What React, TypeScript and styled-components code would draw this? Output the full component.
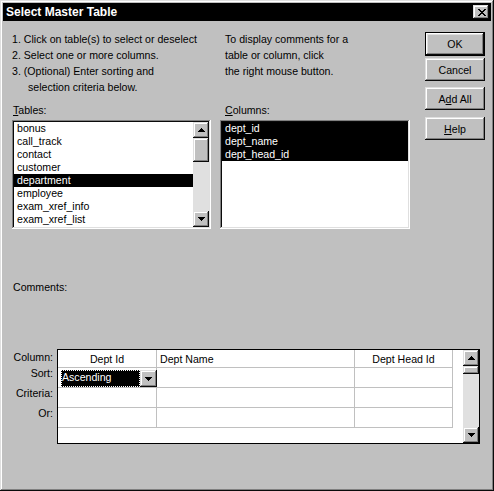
import React from "react";
import styled, { createGlobalStyle } from "styled-components";

const Global = createGlobalStyle`
  html, body { margin: 0; padding: 0; background: #c0c0c0; }
  body {
    font-family: "Liberation Sans", Arial, sans-serif;
    font-size: 10.6px;
    color: #000;
  }
  * { box-sizing: border-box; }
`;

const raised = `
  background: #c0c0c0;
  box-shadow: inset -1px -1px #0a0a0a, inset 1px 1px #dfdfdf,
    inset -2px -2px #808080, inset 2px 2px #fff;
`;

const sunken = `
  box-shadow: inset -1px -1px #fff, inset 1px 1px #808080,
    inset -2px -2px #dfdfdf, inset 2px 2px #0a0a0a;
`;

const Window = styled.div`
  width: 494px;
  height: 491px;
  padding: 3px;
  background: #c0c0c0;
  box-shadow: inset -1px -1px #0a0a0a, inset 1px 1px #dfdfdf,
    inset -2px -2px #808080, inset 2px 2px #fff;
  display: flex;
  flex-direction: column;
`;

const TitleBar = styled.div`
  height: 18px;
  flex: none;
  background: #000;
  color: #fff;
  display: flex;
  align-items: center;
  justify-content: space-between;
  padding: 0 2px 0 3px;
`;

const Title = styled.span`
  font-weight: bold;
  font-size: 12px;
  line-height: 14px;
`;

const CloseButton = styled.div`
  ${raised}
  width: 16px;
  height: 14px;
  display: flex;
  align-items: center;
  justify-content: center;
  padding-left: 1px;
`;

const Body = styled.div`
  padding-left: 9px;
  display: flex;
  flex-direction: column;
`;

const TopArea = styled.div`
  display: flex;
`;

const LeftPane = styled.div`
  width: 398px;
  display: flex;
  flex-direction: column;
`;

const Instructions = styled.div`
  display: flex;
  padding-top: 10px;
  line-height: 16px;
`;

const InstrCol = styled.div<{ $width?: number }>`
  width: ${(p) => (p.$width ? `${p.$width}px` : "auto")};
  flex: none;
  white-space: nowrap;
`;

const InstrLine = styled.div<{ $indent?: boolean }>`
  padding-left: ${(p) => (p.$indent ? "16px" : "0")};
`;

const ListsRow = styled.div`
  display: flex;
  gap: 9px;
`;

const ListGroup = styled.div<{ $width: number }>`
  width: ${(p) => p.$width}px;
  display: flex;
  flex-direction: column;
`;

const FieldLabel = styled.div<{ $indent: number }>`
  margin-top: 8px;
  line-height: 14px;
  height: 14px;
  padding-left: ${(p) => p.$indent}px;
  white-space: nowrap;
`;

const ListBox = styled.div`
  ${sunken}
  background: #fff;
  margin-top: 3px;
  height: 109px;
  padding: 2px;
  display: flex;
`;

const Items = styled.div`
  flex: 1;
  overflow: hidden;
`;

const ListItem = styled.div<{ $selected?: boolean }>`
  height: 13px;
  line-height: 13px;
  padding-left: 3px;
  white-space: nowrap;
  background: ${(p) => (p.$selected ? "#000" : "transparent")};
  color: ${(p) => (p.$selected ? "#fff" : "#000")};
`;

const ScrollBar = styled.div`
  width: 16px;
  flex: none;
  display: flex;
  flex-direction: column;
`;

const ArrowButton = styled.div`
  ${raised}
  width: 16px;
  height: 16px;
  flex: none;
  display: flex;
  align-items: center;
  justify-content: center;
`;

const Track = styled.div`
  flex: 1;
  background: #e0e0e0;
  display: flex;
  flex-direction: column;
`;

const Thumb = styled.div<{ $size: number }>`
  ${raised}
  height: ${(p) => p.$size}px;
  flex: none;
`;

const ButtonColumn = styled.div`
  margin-left: 15px;
  padding-top: 11px;
  display: flex;
  flex-direction: column;
`;

const Button = styled.div<{ $default?: boolean; $gap: number }>`
  ${raised}
  width: 60px;
  height: ${(p) => (p.$default ? 24 : 23)}px;
  margin-top: ${(p) => p.$gap}px;
  display: flex;
  align-items: center;
  justify-content: center;
  ${(p) =>
    p.$default
      ? `box-shadow: inset 0 0 0 1px #000, inset -2px -2px #0a0a0a, inset 2px 2px #fff,
        inset -3px -3px #808080, inset 3px 3px #dfdfdf;`
      : ""}
`;

const CommentsLabel = styled.div`
  margin-top: 51px;
  line-height: 14px;
  height: 14px;
  padding-left: 1px;
`;

const GridSection = styled.div`
  margin-top: 55px;
  display: flex;
  gap: 4px;
`;

const RowLabels = styled.div`
  width: 41px;
  padding-top: 1px;
  display: grid;
  grid-template-rows: 16px 20px 20px 20px;
  align-content: start;
  text-align: right;
  line-height: 14px;
`;

const GridBox = styled.div`
  width: 423px;
  height: 95px;
  border: 1px solid #000;
  background: #fff;
  display: flex;
`;

const GridTable = styled.div`
  display: grid;
  grid-template-columns: 99px 198px 98px;
  grid-template-rows: 18px 20px 20px 20px;
  align-content: start;
`;

const Cell = styled.div<{ $align?: "center" | "left" }>`
  border-right: 1px solid #c0c0c0;
  border-bottom: 1px solid #c0c0c0;
  display: flex;
  align-items: center;
  justify-content: ${(p) => (p.$align === "center" ? "center" : "flex-start")};
  padding-left: ${(p) => (p.$align === "center" ? 0 : 3)}px;
  white-space: nowrap;
`;

const ComboCell = styled.div`
  border-right: 1px solid #c0c0c0;
  border-bottom: 1px solid #c0c0c0;
  padding: 2px 0 0 3px;
  position: relative;
  z-index: 1;
`;

const Combo = styled.div`
  width: 96px;
  height: 17px;
  display: flex;
`;

const ComboText = styled.div`
  flex: 1;
  background: #000;
  color: #fff;
  line-height: 15px;
  padding-left: 1px;
  outline: 1px dotted #fff;
  outline-offset: -1px;
`;

const ComboButton = styled(ArrowButton)`
  width: 17px;
  height: 17px;
`;

const GridSpacer = styled.div`
  flex: 1;
`;

const Arrow = ({ dir }: { dir: "up" | "down" }) => {
  const rows = dir === "down" ? [7, 5, 3, 1] : [1, 3, 5, 7];
  return (
    <svg width="7" height="4" viewBox="0 0 7 4" shapeRendering="crispEdges">
      {rows.map((w, i) => (
        <rect key={i} x={(7 - w) / 2} y={i} width={w} height={1} fill="#000" />
      ))}
    </svg>
  );
};

const CloseGlyph = () => {
  const px = [
    "XX....XX",
    ".XX..XX.",
    "..XXXX..",
    "...XX...",
    "..XXXX..",
    ".XX..XX.",
    "XX....XX",
  ];
  return (
    <svg width="8" height="7" viewBox="0 0 8 7" shapeRendering="crispEdges">
      {px.flatMap((row, y) =>
        row.split("").map((c, x) =>
          c === "X" ? <rect key={`${x}-${y}`} x={x} y={y} width={1} height={1} fill="#000" /> : null
        )
      )}
    </svg>
  );
};

const VScroll = ({ thumb }: { thumb: number }) => (
  <ScrollBar>
    <ArrowButton>
      <Arrow dir="up" />
    </ArrowButton>
    <Track>
      <Thumb $size={thumb} />
    </Track>
    <ArrowButton>
      <Arrow dir="down" />
    </ArrowButton>
  </ScrollBar>
);

const tables = [
  "bonus",
  "call_track",
  "contact",
  "customer",
  "department",
  "employee",
  "exam_xref_info",
  "exam_xref_list",
];

const columns = ["dept_id", "dept_name", "dept_head_id"];

export default function App() {
  return (
    <>
      <Global />
      <Window>
        <TitleBar>
          <Title>Select Master Table</Title>
          <CloseButton>
            <CloseGlyph />
          </CloseButton>
        </TitleBar>
        <Body>
          <TopArea>
            <LeftPane>
              <Instructions>
                <InstrCol $width={213}>
                  <InstrLine>1. Click on table(s) to select or deselect</InstrLine>
                  <InstrLine>2. Select one or more columns.</InstrLine>
                  <InstrLine>3. (Optional) Enter sorting and</InstrLine>
                  <InstrLine $indent>selection criteria below.</InstrLine>
                </InstrCol>
                <InstrCol>
                  <InstrLine>To display comments for a</InstrLine>
                  <InstrLine>table or column, click</InstrLine>
                  <InstrLine>the right mouse button.</InstrLine>
                </InstrCol>
              </Instructions>
              <ListsRow>
                <ListGroup $width={199}>
                  <FieldLabel $indent={1}>
                    <u>T</u>ables:
                  </FieldLabel>
                  <ListBox>
                    <Items>
                      {tables.map((t) => (
                        <ListItem key={t} $selected={t === "department"}>
                          {t}
                        </ListItem>
                      ))}
                    </Items>
                    <VScroll thumb={24} />
                  </ListBox>
                </ListGroup>
                <ListGroup $width={190}>
                  <FieldLabel $indent={5}>
                    <u>C</u>olumns:
                  </FieldLabel>
                  <ListBox>
                    <Items>
                      {columns.map((c) => (
                        <ListItem key={c} $selected>
                          {c}
                        </ListItem>
                      ))}
                    </Items>
                  </ListBox>
                </ListGroup>
              </ListsRow>
            </LeftPane>
            <ButtonColumn>
              <Button $default $gap={0}>OK</Button>
              <Button $gap={2}>Cancel</Button>
              <Button $gap={6}>
                A<u>d</u>d All
              </Button>
              <Button $gap={7}>
                <u>H</u>elp
              </Button>
            </ButtonColumn>
          </TopArea>
          <CommentsLabel>Comments:</CommentsLabel>
          <GridSection>
            <RowLabels>
              <div>Column:</div>
              <div>Sort:</div>
              <div>Criteria:</div>
              <div>Or:</div>
            </RowLabels>
            <GridBox>
              <GridTable>
                <Cell $align="center">Dept Id</Cell>
                <Cell>Dept Name</Cell>
                <Cell $align="center">Dept Head Id</Cell>
                <ComboCell>
                  <Combo>
                    <ComboText>Ascending</ComboText>
                    <ComboButton>
                      <Arrow dir="down" />
                    </ComboButton>
                  </Combo>
                </ComboCell>
                <Cell />
                <Cell />
                <Cell />
                <Cell />
                <Cell />
                <Cell />
                <Cell />
                <Cell />
              </GridTable>
              <GridSpacer />
              <VScroll thumb={8} />
            </GridBox>
          </GridSection>
        </Body>
      </Window>
    </>
  );
}
